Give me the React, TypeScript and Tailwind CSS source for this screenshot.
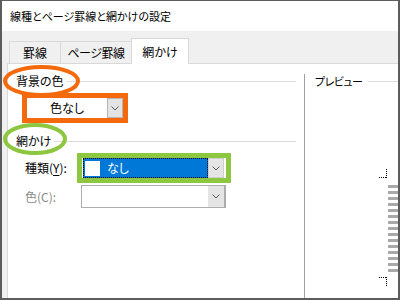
const Chevron = () => (
  <svg width="8" height="5" viewBox="0 0 8 5">
    <path d="M0.5 0.5 L4 4 L7.5 0.5" fill="none" stroke="#5a5a5a" strokeWidth="1" />
  </svg>
);

const PreviewMarks = () => {
  const bars = Array.from({ length: 15 }, (_, i) => 25 + i * 6);
  return (
    <svg width="28" height="130" viewBox="0 0 28 130">
      <path d="M16.5 9 V18 M9 17.5 H17" stroke="#000" strokeWidth="1" strokeDasharray="1 1" fill="none" />
      {bars.map((y) => (
        <rect key={y} x="18" y={y} width="10" height="3" fill="#a9a9a9" />
      ))}
      <path d="M9 117.5 H17 M16.5 117 V126" stroke="#000" strokeWidth="1" strokeDasharray="1 1" fill="none" />
    </svg>
  );
};

const App = () => {
  return (
    <div
      className="relative w-[400px] h-[300px] flex flex-col border-t border-l-2 border-r-2 border-b-2 border-[#5c5c5c] bg-white text-black text-[12px] leading-[14px] [font-feature-settings:'palt']"
      style={{ fontFamily: '"Noto Sans CJK JP", "Noto Sans", sans-serif' }}
    >
      {/* title */}
      <div className="h-[30px] flex items-center pl-[8px] bg-white text-[11px]">線種とページ罫線と網かけの設定</div>

      <div className="flex-1 flex flex-col bg-[#f0f0f0] pl-[5px]">
        {/* tabs */}
        <div className="h-[32px] flex items-end pl-[2px]">
          <div className="w-[52px] h-[22px] flex items-center justify-center border border-b-0 border-[#d9d9d9] bg-[#f0f0f0]">罫線</div>
          <div className="-ml-px w-[72px] h-[22px] flex items-center justify-center border border-b-0 border-[#d9d9d9] bg-[#f0f0f0] tracking-[-0.5px]">ページ罫線</div>
          <div className="relative z-10 -ml-px -mb-px w-[58px] h-[26px] flex items-center justify-center border border-b-0 border-[#d9d9d9] bg-white">網かけ</div>
        </div>

        {/* panel */}
        <div className="flex-1 flex bg-white border-t border-l border-[#d9d9d9]">
          <div className="w-[288px] pl-[8px] pt-[10px] flex flex-col">
            <div className="h-[14px] flex items-center gap-[3px]">
              <span>背景の色</span>
              <div className="flex-1 h-px bg-[#dcdcdc]" />
            </div>

            <div className="mt-[5px] ml-[6px] w-[106px] h-[30px] border-[5px] border-[#f4690c] flex bg-white">
              <div className="flex-1 flex items-center justify-center">色なし</div>
              <div className="w-[16px] flex items-center justify-center bg-[#e3e3e3] border border-[#b5b5b5]">
                <Chevron />
              </div>
            </div>

            <div className="mt-[11px] h-[14px] flex items-center gap-[3px]">
              <span>網かけ</span>
              <div className="flex-1 h-px bg-[#dcdcdc]" />
            </div>

            <div className="mt-[5px] h-[30px] flex items-center">
              <div className="w-[61px] pl-[9px]">
                種類(<span className="underline underline-offset-2">Y</span>):
              </div>
              <div className="w-[154px] h-[30px] border-[5px] border-[#8dc63f] flex bg-white">
                <div className="ml-px w-[125px] h-full flex items-center bg-[#0078d7] border border-dotted border-black">
                  <div className="ml-px w-[15px] h-[15px] bg-white" />
                  <span className="ml-[7px] text-white">なし</span>
                </div>
                <div className="w-[16px] flex items-center justify-center bg-[#e5e5e5] border border-[#cfcfcf]">
                  <Chevron />
                </div>
              </div>
            </div>

            <div className="mt-[2px] h-[23px] flex items-center">
              <div className="w-[65px] pl-[9px] text-[#8a8a8a]">色(C):</div>
              <div className="w-[145px] h-[23px] flex border border-r-2 border-[#adadad] bg-white">
                <div className="flex-1" />
                <div className="w-[16px] flex items-center justify-center bg-[#e5e5e5]">
                  <Chevron />
                </div>
              </div>
            </div>
          </div>

          {/* preview */}
          <div className="ml-[8px] mt-[10px] flex-1 flex flex-col border-l border-[#a0a0a0]">
            <div className="h-[14px] pl-[10px] flex items-center gap-[5px]">
              <span className="text-[11px] tracking-[-0.5px]">プレビュー</span>
              <div className="flex-1 h-px bg-[#dcdcdc]" />
            </div>
            <div className="mt-[72px] self-end">
              <PreviewMarks />
            </div>
          </div>
        </div>
      </div>

      {/* annotations */}
      <svg className="absolute left-[1px] top-[64px]" width="77" height="32" viewBox="0 0 77 32">
        <ellipse cx="38.5" cy="16" rx="36.5" ry="14" fill="none" stroke="#f4690c" strokeWidth="4" />
      </svg>
      <svg className="absolute left-[1px] top-[122px]" width="64" height="32" viewBox="0 0 64 32">
        <ellipse cx="32" cy="16" rx="30" ry="14" fill="none" stroke="#8dc63f" strokeWidth="4" />
      </svg>
    </div>
  );
};

export default App;
